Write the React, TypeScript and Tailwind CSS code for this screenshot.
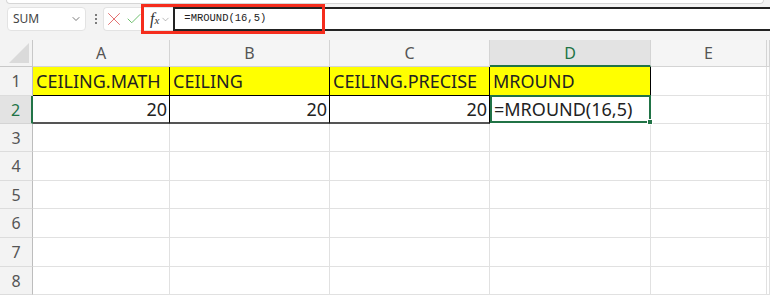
import { X, Check, ChevronDown } from 'lucide-react'

const colLetters = ['A', 'B', 'C', 'D', 'E', '']
const rowHeights = ['h-[29px]', 'h-[28px]', 'h-[28px]', 'h-[29px]', 'h-[28px]', 'h-[29px]', 'h-[29px]', 'h-[28px]']

const row1 = ['CEILING.MATH', 'CEILING', 'CEILING.PRECISE', 'MROUND']
const row2 = ['20', '20', '20']

function FormulaBar() {
  return (
    <div className="relative flex h-[30px] items-center pl-[7px]">
      {/* name box */}
      <div className="flex h-[24px] w-[79px] items-center justify-between rounded-[4px] border border-[#e3e3e3] bg-white pl-[5px] pr-[3px] text-[12px] text-[#444]">
        <span>SUM</span>
        <ChevronDown size={12} strokeWidth={1.6} className="text-[#555]" />
      </div>
      {/* dots */}
      <div className="ml-[8px] flex w-[4px] flex-col items-center gap-[2px]">
        <span className="h-[2px] w-[2px] rounded-full bg-[#555]" />
        <span className="h-[2px] w-[2px] rounded-full bg-[#555]" />
        <span className="h-[2px] w-[2px] rounded-full bg-[#555]" />
      </div>
      {/* cancel / enter / fx */}
      <div className="ml-[5px] flex h-[24px] items-center rounded-l-[4px] border border-r-0 border-[#e3e3e3] bg-white">
        <X size={22} strokeWidth={1} className="-ml-[1px] text-[#e06666]" />
        <Check size={18} strokeWidth={1.2} className="text-[#5cb85c]" />
        <span className="ml-[7px] font-['Liberation_Serif',serif] text-[16px] italic leading-none text-[#333]">
          f<span className="text-[11px]">x</span>
        </span>
        <ChevronDown size={11} strokeWidth={1.3} className="ml-[1px] mr-[2px] text-[#888]" />
      </div>
      {/* formula input */}
      <div className="flex h-[24px] flex-1 items-center border-y-2 border-l-2 border-[#222] bg-white pl-[9px] font-['Liberation_Mono',monospace] text-[10.5px] text-[#222]">
        =MROUND(16,5)
      </div>
      {/* red annotation box */}
      <div className="pointer-events-none absolute left-[141px] top-0 h-[30px] w-[184px] border-[3px] border-[#f52d1d]" />
    </div>
  )
}

function Sheet() {
  return (
    <div className="grid grid-cols-[33px_137px_160px_160px_161px_116px_1fr] bg-white">
      {/* header row */}
      <div className="relative h-[27px] border-b border-r border-[#c8c8c8] bg-[#f3f3f3]">
        <div className="absolute bottom-[3px] right-[3px] h-0 w-0 border-b-[20px] border-l-[20px] border-b-[#dadada] border-l-transparent" />
      </div>
      {colLetters.map((c, i) =>
        c === 'D' ? (
          <div
            key={i}
            className="flex h-[27px] items-center justify-center border-b-2 border-r border-b-[#217346] border-r-[#d4d4d4] bg-[#e3e3e3] text-[16px] text-[#217346]"
          >
            {c}
          </div>
        ) : (
          <div
            key={i}
            className="flex h-[27px] items-center justify-center border-b border-r border-[#d4d4d4] bg-[#f5f5f5] text-[16px] text-[#555]"
          >
            {c}
          </div>
        )
      )}

      {rowHeights.map((h, r) => {
        const n = r + 1
        const cells = colLetters.map((_, c) => {
          if (n === 1 && c < 4) {
            return (
              <div
                key={c}
                className={`flex items-center overflow-hidden whitespace-nowrap border-b border-r border-black bg-[#ffff00] pl-[3px] text-[18px] text-[#222] ${h}`}
              >
                {row1[c]}
              </div>
            )
          }
          if (n === 2 && c < 3) {
            return (
              <div
                key={c}
                className={`flex items-center justify-end border-b-2 border-r border-b-[#555] border-r-black pr-[2px] text-[18px] text-[#222] ${h}`}
              >
                {row2[c]}
              </div>
            )
          }
          if (n === 2 && c === 3) {
            return (
              <div
                key={c}
                className={`relative -mt-[1px] flex items-center whitespace-nowrap border-2 border-[#217346] pl-[2px] text-[18px] text-[#222] ${h}`}
              >
                =MROUND(16,5)
                <div className="absolute -bottom-[4px] -right-[4px] h-[6px] w-[6px] border border-white bg-[#217346]" />
              </div>
            )
          }
          return <div key={c} className={`border-b border-r border-[#e1e1e1] ${h}`} />
        })
        return [
          n === 2 ? (
            <div
              key={`h${n}`}
              className={`flex items-center justify-center border-b border-r-2 border-b-[#d4d4d4] border-r-[#217346] bg-[#e3e3e3] text-[16px] text-[#217346] ${h}`}
            >
              {n}
            </div>
          ) : (
            <div
              key={`h${n}`}
              className={`flex items-center justify-center border-b border-r border-b-[#dcdcdc] border-r-[#bdbdbd] bg-[#f3f3f3] text-[16px] text-[#555] ${h}`}
            >
              {n}
            </div>
          ),
          ...cells,
        ]
      })}
    </div>
  )
}

export default function App() {
  return (
    <div className="h-[295px] w-[770px] overflow-hidden bg-[#f3f3f3] font-['Noto_Sans',sans-serif]">
      {/* ribbon bottom edge */}
      <div className="mx-[6px] h-[4px] rounded-b-[6px] border-x border-b border-[#d6d6d6] bg-white" />
      <FormulaBar />
      <div className="h-[6px]" />
      <Sheet />
    </div>
  )
}
